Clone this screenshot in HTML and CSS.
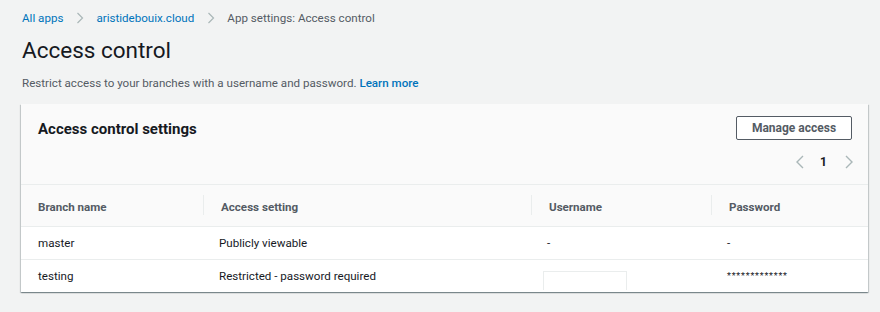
FILE: index.html
```html
<html>
  <head>
    <title>App settings: Access control</title>
    <link rel="stylesheet" href="styles.css">
  </head>
  <body>
    <div class="page">
      <nav class="crumbs">
        <a href="#">All apps</a>
        <span class="sep"><svg width="8" height="12" viewBox="0 0 8 12"><path d="M1.5 1 L6.5 6 L1.5 11" fill="none" stroke="#aab7b8" stroke-width="1.2"/></svg></span>
        <a href="#">aristidebouix.cloud</a>
        <span class="sep"><svg width="8" height="12" viewBox="0 0 8 12"><path d="M1.5 1 L6.5 6 L1.5 11" fill="none" stroke="#aab7b8" stroke-width="1.2"/></svg></span>
        <span class="here">App settings: Access control</span>
      </nav>

      <h1>Access control</h1>
      <p class="desc">Restrict access to your branches with a username and password. <a href="#">Learn more</a></p>

      <div class="card">
        <div class="card-head">
          <h2>Access control settings</h2>
          <div class="tools">
            <button class="btn">Manage access</button>
            <div class="pager">
              <span class="arrow">
                <svg width="10" height="14" viewBox="0 0 10 14"><path d="M8 1 L2 7 L8 13" fill="none" stroke="#aab7b8" stroke-width="1.4"/></svg>
              </span>
              <span class="num">1</span>
              <span class="arrow">
                <svg width="10" height="14" viewBox="0 0 10 14"><path d="M2 1 L8 7 L2 13" fill="none" stroke="#aab7b8" stroke-width="1.4"/></svg>
              </span>
            </div>
          </div>
        </div>

        <table class="grid">
          <colgroup>
            <col class="c1"><col class="c2"><col class="c3"><col class="c4">
          </colgroup>
          <tr>
            <th><span>Branch name</span></th>
            <th><span>Access setting</span></th>
            <th><span>Username</span></th>
            <th><span>Password</span></th>
          </tr>
          <tr>
            <td>master</td>
            <td>Publicly viewable</td>
            <td>-</td>
            <td>-</td>
          </tr>
          <tr>
            <td>testing</td>
            <td>Restricted - password required</td>
            <td><div class="blank"></div></td>
            <td class="stars">*************</td>
          </tr>
        </table>
      </div>
    </div>
  </body>
</html>
```

FILE: styles.css
```css
body { margin: 0; background-color: #f2f3f3; color: #16191f;
       font-family: Roboto, "Liberation Sans", sans-serif; font-size: 11.6px; }

a { color: #0073bb; text-decoration: none; }

.page { padding: 9px 12px 0 22px; }

.crumbs { display: flex; align-items: center; height: 18px; }
.crumbs .sep  { display: flex; margin: 0 12px 0 13px; }
.crumbs .here { color: #545b64; }

h1 { font-size: 22.5px; font-weight: 400; margin: 8px 0 0 0; line-height: 30px; }

.desc { color: #545b64; margin: 10px 0 0 0; line-height: 16px; }
.desc a { font-weight: 500; }

.card { margin-top: 13px; width: 847px; margin-left: -1px; background-color: #ffffff;
        box-shadow: 0 1px 1px 0 rgba(0,28,36,.3), 1px 1px 1px 0 rgba(0,28,36,.15), -1px 1px 1px 0 rgba(0,28,36,.15); }

.card-head { display: flex; justify-content: space-between; background-color: #fafafa;
             height: 81px; border-bottom: 1px solid #eaeded; box-sizing: border-box;
             padding: 12px 16px 0 17px; }
.card-head h2 { font-size: 15px; font-weight: 700; margin: 4px 0 0 0; line-height: 18px; }

.tools { display: flex; flex-direction: column; align-items: flex-end; }

.btn { width: 116px; height: 24px; background-color: #ffffff; border: 1px solid #545b64;
       border-radius: 2px; color: #545b64; font-family: inherit; font-size: 12px; font-weight: 700; padding: 0; }

.pager { display: flex; align-items: center; margin-top: 15px; margin-right: -2px; }
.pager .num { font-weight: 700; margin: 0 17px 0 15px; font-size: 12px; }
.pager .arrow { display: flex; }

.grid { border-collapse: collapse; width: 100%; table-layout: fixed; font-size: 11.6px; color: #16191f; }
col.c1 { width: 182px; }
col.c2 { width: 328px; }
col.c3 { width: 180px; }
col.c4 { width: 157px; }

.grid th { background-color: #fafafa; height: 41px; padding: 0; text-align: left;
           color: #545b64; font-weight: 700; border-bottom: 1px solid #eaeded; }
.grid th span { display: block; padding: 5px 0 1px 17px; border-left: 1px solid #eaeded; line-height: 14px; }
.grid th:first-child span { border-left: none; }

.grid td { height: 33px; padding: 0 0 0 16px; border-bottom: 1px solid #eaeded; }
.grid td:first-child { padding-left: 17px; }
.grid tr:last-child td { border-bottom: none; }

.blank { width: 82px; height: 18px; margin: 9px 0 0 -4px; border: 1px solid #eaeded; border-bottom: none; }
.stars { font-size: 9px; letter-spacing: 0.8px; padding-top: 2px; }
```
